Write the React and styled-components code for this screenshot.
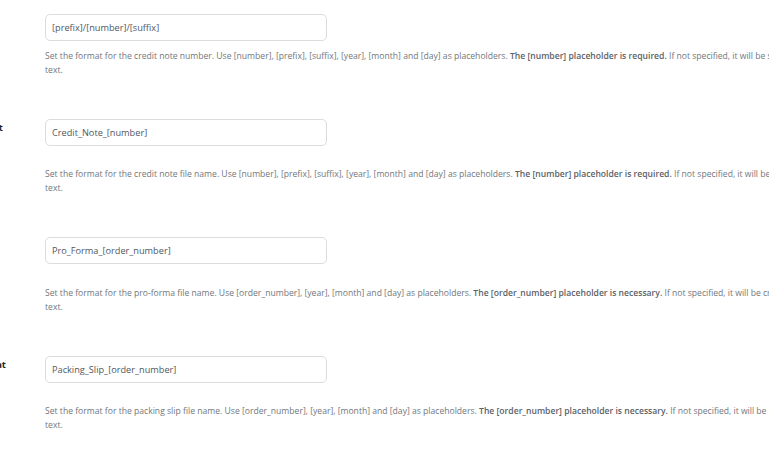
import React from "react";
import styled, { createGlobalStyle } from "styled-components";

const Global = createGlobalStyle`
  html, body { margin: 0; padding: 0; background: #ffffff; overflow: hidden; }
  body { font-family: "Open Sans", "Noto Sans", sans-serif; width: 769px; height: 452px; }
`;

const Page = styled.div`
  width: 769px;
  height: 452px;
  overflow: hidden;
  padding-top: 14px;
  box-sizing: border-box;
`;

const Form = styled.div`
  display: flex;
  flex-direction: column;
  gap: 42px;
  margin-left: -155px;
`;

const Row = styled.div`
  display: flex;
  align-items: flex-start;
`;

const Label = styled.div`
  flex: 0 0 200px;
  box-sizing: border-box;
  padding-right: ${(p) => p.$end}px;
  padding-top: 2px;
  text-align: right;
  white-space: nowrap;
  font-size: 9.5px;
  line-height: 14px;
  font-weight: 700;
  color: #1d2327;
`;

const Field = styled.div`
  display: flex;
  flex-direction: column;
  gap: ${(p) => p.$gap}px;
  min-width: 0;
`;

const Input = styled.input`
  width: 282px;
  height: 27px;
  box-sizing: border-box;
  border: 1px solid #dcdcde;
  border-radius: 5px;
  padding: 0 6px;
  font-family: "Open Sans", "Noto Sans", sans-serif;
  font-size: 9.2px;
  color: #50575e;
  background: #ffffff;
  outline: none;
`;

const Desc = styled.p`
  margin: 0;
  font-size: 8.6px;
  line-height: 14px;
  color: #72777c;
`;

const Line = styled.span`
  display: block;
  white-space: nowrap;
`;

const Strong = styled.strong`
  font-weight: 600;
  color: #5c6166;
`;

const rows = [
  {
    label: "Credit Note Number Format",
    end: 60,
    value: "[prefix]/[number]/[suffix]",
    gap: 8,
    pre: "Set the format for the credit note number. Use [number], [prefix], [suffix], [year], [month] and [day] as placeholders. ",
    strong: "The [number] placeholder is required.",
    post: " If not specified, it will be set to the default",
  },
  {
    label: "Credit Note File Name Format",
    end: 42,
    value: "Credit_Note_[number]",
    gap: 21,
    pre: "Set the format for the credit note file name. Use [number], [prefix], [suffix], [year], [month] and [day] as placeholders. ",
    strong: "The [number] placeholder is required.",
    post: " If not specified, it will be set to the default",
  },
  {
    label: "Pro Forma File Name Forma",
    end: 45,
    value: "Pro_Forma_[order_number]",
    gap: 22,
    pre: "Set the format for the pro-forma file name. Use [order_number], [year], [month] and [day] as placeholders. ",
    strong: "The [order_number] placeholder is necessary.",
    post: " If not specified, it will be created with the default",
  },
  {
    label: "Packing Slip File Name Format",
    end: 39,
    value: "Packing_Slip_[order_number]",
    gap: 21,
    pre: "Set the format for the packing slip file name. Use [order_number], [year], [month] and [day] as placeholders. ",
    strong: "The [order_number] placeholder is necessary.",
    post: " If not specified, it will be set to the default",
  },
];

export default function App() {
  return (
    <>
      <Global />
      <Page>
        <Form>
          {rows.map((r) => (
            <Row key={r.value}>
              <Label $end={r.end}>{r.label}</Label>
              <Field $gap={r.gap}>
                <Input defaultValue={r.value} />
                <Desc>
                  <Line>
                    {r.pre}
                    <Strong>{r.strong}</Strong>
                    {r.post}
                  </Line>
                  <Line>text.</Line>
                </Desc>
              </Field>
            </Row>
          ))}
        </Form>
      </Page>
    </>
  );
}
